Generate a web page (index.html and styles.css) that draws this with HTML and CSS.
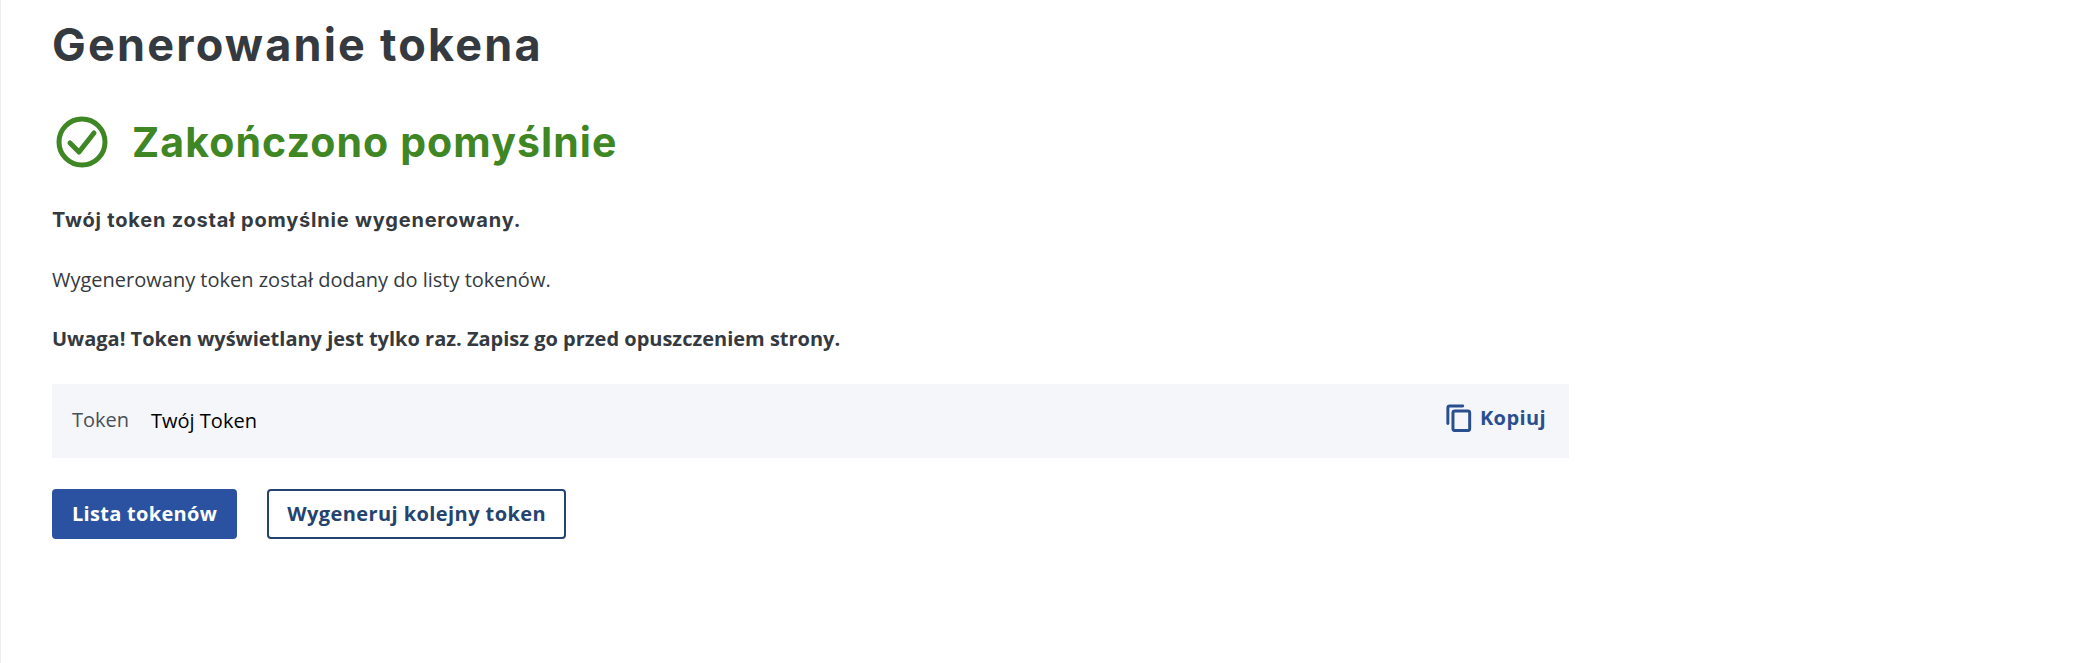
FILE: index.html
```html
<!DOCTYPE html>
<html>
<head>
  <title>Generowanie tokena</title>
  <link rel="stylesheet" href="styles.css">
</head>
<body>
  <div class="container">
    <h1 class="page-title">Generowanie tokena</h1>

    <div class="status">
      <svg class="status-icon" viewBox="0 0 52 52" width="52" height="52">
        <circle cx="26" cy="26" r="23" fill="none" stroke="#3f8624" stroke-width="5"/>
        <path d="M14 27 L23 36 L38 17" fill="none" stroke="#3f8624" stroke-width="5" stroke-linecap="round" stroke-linejoin="round"/>
      </svg>
      <h2 class="status-title">Zakończono pomyślnie</h2>
    </div>

    <p class="lead">Twój token został pomyślnie wygenerowany.</p>
    <p class="text">Wygenerowany token został dodany do listy tokenów.</p>
    <p class="warning">Uwaga! Token wyświetlany jest tylko raz. Zapisz go przed opuszczeniem strony.</p>

    <div class="token-box">
      <span class="token-label">Token</span>
      <span class="token-value">Twój Token</span>
      <a class="copy-link" href="#">
        <svg class="copy-icon" viewBox="0 0 28 30" width="26" height="28">
          <path d="M2 21 V4 Q2 2 4 2 H18" fill="none" stroke="#2a4f8f" stroke-width="3.2" stroke-linecap="round"/>
          <rect x="7.5" y="7.5" width="18" height="21" rx="2" fill="none" stroke="#2a4f8f" stroke-width="3.2"/>
        </svg>
        <span class="copy-text">Kopiuj</span>
      </a>
    </div>

    <div class="actions">
      <a class="btn btn-primary" href="#">Lista tokenów</a>
      <a class="btn btn-outline" href="#">Wygeneruj kolejny token</a>
    </div>
  </div>
</body>
</html>
```

FILE: styles.css
```css
body {
  margin: 0;
  padding: 0;
  background-color: #fff;
  font-family: "Open Sans", sans-serif;
  color: #343a40;
}

.container {
  width: 1569px;
  min-height: 663px;
  box-sizing: border-box;
  padding-left: 51px;
  border-left: 1px solid #eeeeee;
}

.page-title {
  margin: 0;
  padding-top: 17px;
  font-family: "Inter", sans-serif;
  font-size: 45px;
  line-height: 56px;
  letter-spacing: 2.2px;
  font-weight: 700;
  color: #343a40;
}

.status {
  display: flex;
  align-items: center;
  gap: 24px;
  margin-top: 43px;
  padding-left: 4px;
}

.status-title {
  margin: 0;
  font-family: "Inter", sans-serif;
  font-size: 41px;
  line-height: 52px;
  letter-spacing: 1.1px;
  font-weight: 700;
  color: #3f8624;
}

.lead {
  margin: 38px 0 0;
  font-family: "Inter", sans-serif;
  font-size: 20px;
  line-height: 28px;
  letter-spacing: 0.8px;
  font-weight: 700;
}

.text {
  margin: 32px 0 0;
  font-size: 20px;
  line-height: 28px;
}

.warning {
  margin: 31px 0 0;
  font-size: 20px;
  line-height: 28px;
  font-weight: 700;
}

.token-box {
  display: flex;
  align-items: center;
  height: 74px;
  margin-top: 31px;
  padding: 0 23px 0 20px;
  background-color: #f5f6fa;
}

.token-label {
  font-size: 20px;
  color: #495057;
  margin: -4px 22px 0 0;
}

.token-value {
  font-size: 20px;
  color: #000;
  margin-top: -1px;
}

.copy-link {
  display: flex;
  align-items: center;
  gap: 8px;
  margin: -7px 0 0 auto;
  font-size: 20px;
  font-weight: 700;
  letter-spacing: 0.4px;
  color: #2a4f8f;
  text-decoration: none;
}

.actions {
  display: flex;
  gap: 30px;
  margin-top: 31px;
}

.btn {
  display: block;
  box-sizing: border-box;
  height: 50px;
  padding: 0 18px;
  border-radius: 4px;
  font-size: 20px;
  line-height: 46px;
  letter-spacing: 0.3px;
  font-weight: 700;
  text-decoration: none;
}

.btn-primary {
  background-color: #2a52a0;
  border: 2px solid #2a52a0;
  color: #fff;
}

.btn-outline {
  background-color: #fff;
  border: 2px solid #24436f;
  color: #24436f;
  letter-spacing: 0.42px;
}
```
